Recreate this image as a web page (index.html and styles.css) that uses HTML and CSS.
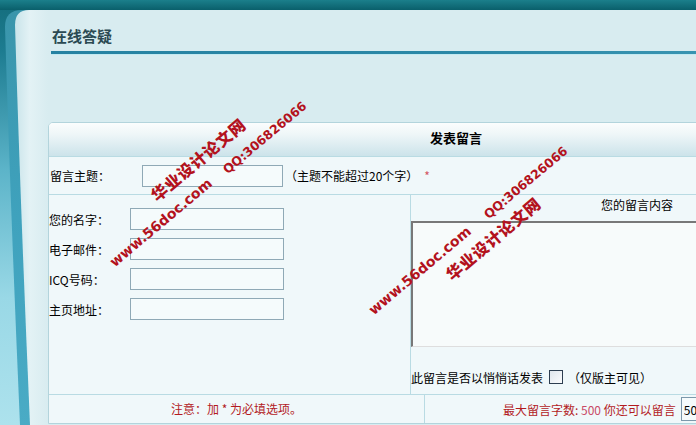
FILE: index.html
```html
<!DOCTYPE html>
<html lang="zh-CN">
<head>
<meta charset="utf-8">
<title>在线答疑</title>
<link rel="stylesheet" href="styles.css">
</head>
<body>
<div class="page">
  <div class="side">
    <svg width="48" height="425" viewBox="0 0 48 425" xmlns="http://www.w3.org/2000/svg">
      <defs>
        <linearGradient id="outer" x1="0" y1="0" x2="0" y2="1">
          <stop offset="0" stop-color="#146d7c"/>
          <stop offset="0.12" stop-color="#1d7c91"/>
          <stop offset="0.4" stop-color="#5cb4c9"/>
          <stop offset="0.7" stop-color="#99d8e6"/>
          <stop offset="1" stop-color="#ade2ed"/>
        </linearGradient>
        <linearGradient id="band" x1="0" y1="0" x2="0" y2="1">
          <stop offset="0" stop-color="#3a95ab"/>
          <stop offset="0.5" stop-color="#3fa2bd"/>
          <stop offset="1" stop-color="#4aabc5"/>
        </linearGradient>
        <linearGradient id="inner" x1="0" y1="0" x2="1" y2="0">
          <stop offset="0" stop-color="#c9e4ea"/>
          <stop offset="0.45" stop-color="#e3f2f5"/>
          <stop offset="1" stop-color="#d8ecf0"/>
        </linearGradient>
        <linearGradient id="top" x1="0" y1="0" x2="0" y2="1">
          <stop offset="0" stop-color="#1b7f8b"/>
          <stop offset="1" stop-color="#0a5f6b"/>
        </linearGradient>
      </defs>
      <rect x="0" y="0" width="48" height="425" fill="url(#outer)"/>
      <path d="M48 10 L22 10 Q5 10 5 27 Q11 220 20 425 L48 425 Z" fill="url(#band)"/>
      <path d="M48 10 L29 10 Q15 10 15 25 Q21 220 30 425 L48 425 Z" fill="url(#inner)"/>
      <rect x="0" y="0" width="48" height="10" fill="url(#top)"/>
    </svg>
  </div>
  <div class="main">
    <div class="topbar"></div>
    <div class="content">
      <h1 class="title">在线答疑</h1>
      <div class="rule"></div>
      <div class="formbox">
        <div class="fhead">发表留言</div>
        <div class="subject">
          <span class="slabel">留言主题：</span>
          <input class="txt subj" type="text">
          <span class="hint">（主题不能超过20个字）</span>
          <span class="star">*</span>
        </div>
        <div class="body">
          <div class="left">
            <div class="field"><span class="flabel">您的名字：</span><input class="txt" type="text"></div>
            <div class="field"><span class="flabel">电子邮件：</span><input class="txt" type="text"></div>
            <div class="field"><span class="flabel">ICQ号码：</span><input class="txt" type="text"></div>
            <div class="field"><span class="flabel">主页地址：</span><input class="txt" type="text"></div>
          </div>
          <div class="right">
            <div class="rtitle">您的留言内容</div>
            <textarea class="msg"></textarea>
            <div class="private">
              <span>此留言是否以悄悄话发表</span>
              <input class="chk" type="checkbox">
              <span class="note">（仅版主可见）</span>
            </div>
          </div>
        </div>
        <div class="foot">
          <div class="fl">注意：加 * 为必填选项。</div>
          <div class="fr">
            <span>最大留言字数: <span class="num">500</span> 你还可以留言</span>
            <input class="count" type="text" value="500">
          </div>
        </div>
      </div>
    </div>
  </div>

  <span class="wm cn w1">华业设计论文网</span>
  <span class="wm url u1">www.56doc.com</span>
  <span class="wm qq q1">QQ:306826066</span>
  <span class="wm cn w2">华业设计论文网</span>
  <span class="wm url u2">www.56doc.com</span>
  <span class="wm qq q2">QQ:306826066</span>
</div>
</body>
</html>
```

FILE: styles.css
```css
* { box-sizing: border-box; }
html, body { margin: 0; padding: 0; }
body {
  width: 696px;
  height: 425px;
  overflow: hidden;
  background: #d8ecf0;
  font-family: "Noto Sans CJK SC", "Liberation Sans", sans-serif;
  font-size: 12px;
  color: #000;
}
.page {
  position: relative;
  display: flex;
  width: 696px;
  height: 425px;
  overflow: hidden;
}
.side { flex: 0 0 48px; height: 425px; }
.side svg { display: block; }
.main { flex: 0 0 840px; }
.topbar {
  height: 10px;
  background: linear-gradient(#1b7f8b, #0a5f6b);
}
.content {
  height: 415px;
  background: #d8ecf0;
  padding-top: 16px;
}
.title {
  margin: 0 0 0 4px;
  height: 20px;
  font-size: 15px;
  line-height: 20px;
  font-weight: bold;
  color: #2b4a53;
}
.rule {
  margin: 5px 0 0 3px;
  height: 3px;
  background: linear-gradient(to right, #2682a2, #2b88a7 50%, #449eba);
  box-shadow: 0 1px 0 #c3eaf2;
}
.formbox {
  margin-top: 68px;
  width: 816px;
  border: 1px solid #b3d4dc;
  border-top-left-radius: 5px;
  background: #f0f8fa;
}
.fhead {
  height: 34px;
  border-bottom: 1px solid #b9dbe3;
  border-top-left-radius: 4px;
  background: linear-gradient(#fbfdfd, #eef6f8 35%, #cce3ea);
  text-align: center;
  font-size: 13px;
  font-weight: bold;
  line-height: 30px;
}
.txt {
  width: 154px;
  height: 22px;
  margin: 0;
  padding: 0 2px;
  border: 1px solid #8fa9b6;
  background: #f5fbfc;
  font: inherit;
}
.subject {
  display: flex;
  align-items: center;
  height: 38px;
  border-bottom: 1px solid #b9dbe3;
}
.slabel { width: 93px; padding-left: 1px; }
.txt.subj { width: 141px; }
.hint { margin-left: 2px; }
.star { margin-left: 6px; color: #d2555f; }
.body {
  display: flex;
  height: 200px;
  border-bottom: 1px solid #b9dbe3;
}
.left { width: 361px; padding-top: 13px; }
.field {
  display: flex;
  align-items: center;
  height: 22px;
  margin-bottom: 8px;
}
.flabel { width: 81px; }
.right {
  flex: 1;
  display: flex;
  flex-direction: column;
  border-left: 1px solid #b9dbe3;
}
.rtitle {
  height: 26px;
  line-height: 20px;
  text-align: center;
}
.msg {
  display: block;
  width: 100%;
  height: 126px;
  margin: 0;
  resize: none;
  border-style: solid;
  border-width: 2px 1px 1px 2px;
  border-color: #787878 #dedede #dedede #787878;
  background: #f7fbfb;
}
.private {
  display: flex;
  align-items: center;
  height: 47px;
  padding-top: 13px;
}
.chk {
  appearance: none;
  -webkit-appearance: none;
  width: 14px;
  height: 14px;
  margin: 0 0 0 6px;
  border: 1px solid #2d3e50;
  background: linear-gradient(135deg, #dfe6ec, #fbfcfd);
}
.note { margin-left: 5px; }
.foot {
  display: flex;
  height: 28px;
  color: #b31b1f;
}
.fl {
  width: 376px;
  border-right: 1px solid #b9dbe3;
  text-align: center;
  line-height: 28px;
}
.fr {
  flex: 1;
  display: flex;
  align-items: center;
  padding-left: 78px;
}
.num { color: #c94a66; }
.count {
  width: 60px;
  height: 24px;
  margin: 0 0 0 5px;
  padding: 0 2px;
  border: 1px solid #7c98ab;
  background: #f5fbfc;
  font: inherit;
  color: #000;
}
.wm {
  position: absolute;
  white-space: nowrap;
  line-height: 1;
  color: #b3121d;
  transform-origin: 0 100%;
  transform: rotate(-40deg);
}
.wm.cn {
  font-family: "Noto Sans CJK SC", sans-serif;
  font-weight: 900;
  font-size: 16px;
  letter-spacing: 0.8px;
}
.wm.url {
  font-family: "DejaVu Sans", sans-serif;
  font-weight: bold;
  font-size: 14px;
}
.wm.qq {
  font-family: "DejaVu Sans", sans-serif;
  font-weight: bold;
  font-size: 12.5px;
}
.w1 { left: 158px; top: 187px; }
.u1 { left: 116px; top: 255px; }
.q1 { left: 229px; top: 164px; }
.w2 { left: 453px; top: 266px; }
.u2 { left: 375px; top: 303px; }
.q2 { left: 490px; top: 209px; }
```
